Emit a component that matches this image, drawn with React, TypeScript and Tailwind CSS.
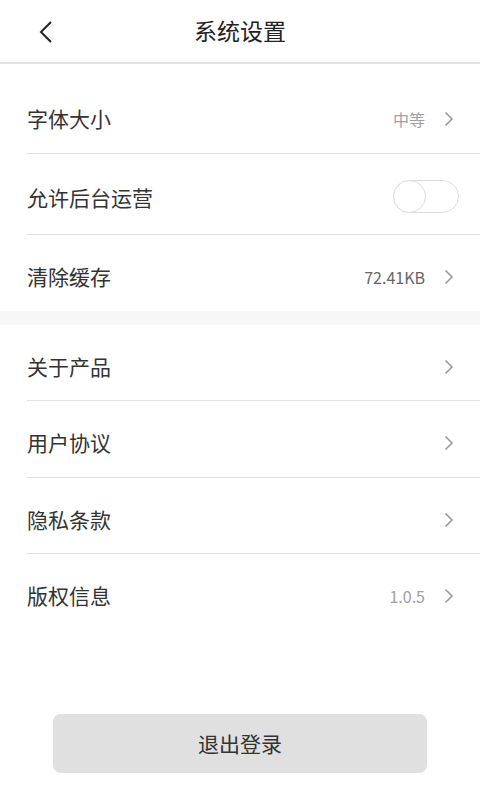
const font = { fontFamily: '"Noto Sans CJK SC", "Noto Sans", sans-serif' };

interface RowProps {
  label: string;
  value?: string;
  valueClass?: string;
  height: string;
  divider?: boolean;
  children?: React.ReactNode;
}

function Arrow() {
  return (
    <svg width="10" height="16" viewBox="0 0 10 16" className="ml-[19px]">
      <path d="M1.5 1.5 L8 8 L1.5 14.5" fill="none" stroke="#9a9a9a" strokeWidth="1.6" />
    </svg>
  );
}

function Row({ label, value, valueClass, height, divider, children }: RowProps) {
  return (
    <div className="pl-[27px]">
      <div
        className={`flex items-center pt-2 pr-[26px] ${height} ${
          divider ? "border-b border-[#e2e2e2]" : ""
        }`}
      >
        <span className="flex-1 text-[21px] text-[#333]">{label}</span>
        {children ?? (
          <div className="flex items-center">
            {value && (
              <span className={`text-[16px] ${valueClass ?? "text-[#a0a0a0]"}`}>
                {value}
              </span>
            )}
            <Arrow />
          </div>
        )}
      </div>
    </div>
  );
}

function Toggle() {
  return (
    <div className="relative -mr-[5px] -mt-[4px] h-[33px] w-[66px] rounded-full border border-[#dedede] bg-white">
      <div className="absolute -left-px -top-px h-[33px] w-[33px] rounded-full border border-[#dcdcdc] bg-white" />
    </div>
  );
}

export default function App() {
  return (
    <div className="flex min-h-[800px] w-[480px] flex-col bg-white" style={font}>
      <header className="relative flex h-[64px] items-center justify-center border-b-2 border-[#e2e2e2]">
        <svg
          width="16"
          height="24"
          viewBox="0 0 16 24"
          className="absolute left-[38px] top-[20px]"
        >
          <path d="M13 2 L3 12 L13 22" fill="none" stroke="#222" strokeWidth="2" />
        </svg>
        <h1 className="-mt-[1px] text-[23px] text-[#222]">系统设置</h1>
      </header>

      <section className="pt-[13px]">
        <Row label="字体大小" value="中等" height="h-[77px]" divider />
        <Row label="允许后台运营" height="h-[81px]" divider>
          <Toggle />
        </Row>
        <Row
          label="清除缓存"
          value="72.41KB"
          valueClass="text-[#666]"
          height="h-[76px]"
        />
      </section>

      <div className="h-[14px] bg-[#f7f7f7]" />

      <section>
        <Row label="关于产品" height="h-[76px]" divider />
        <Row label="用户协议" height="h-[77px]" divider />
        <Row label="隐私条款" height="h-[76px]" divider />
        <Row label="版权信息" value="1.0.5" height="h-[76px]" />
      </section>

      <div className="flex justify-center pt-[84px]">
        <button className="h-[59px] w-[374px] rounded-lg bg-[#e0e0e0] text-[21px] text-[#333]">
          退出登录
        </button>
      </div>
    </div>
  );
}
